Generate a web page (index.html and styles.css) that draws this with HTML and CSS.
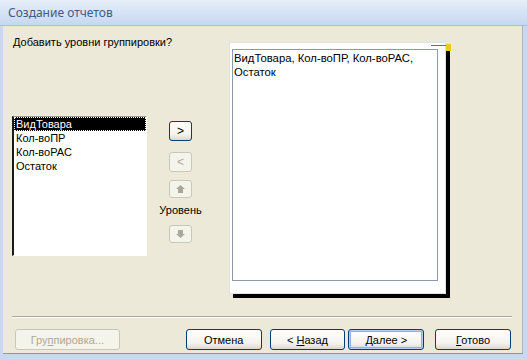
FILE: index.html
```html
<!DOCTYPE html>
<html lang="ru">
<head>
    <meta charset="UTF-8">
    <title>Создание отчетов</title>
    <link rel="stylesheet" href="styles.css">
</head>
<body>
    <div class="window">
        <div class="titlebar">Создание отчетов</div>
        <div class="content">
            <div class="main">
                <div class="left">
                    <div class="label">Добавить уровни группировки?</div>
                    <div class="picker">
                        <div class="list">
                            <div class="item selected">ВидТовара</div>
                            <div class="item">Кол-воПР</div>
                            <div class="item">Кол-воРАС</div>
                            <div class="item">Остаток</div>
                        </div>
                        <div class="moves">
                            <button class="btn small">&gt;</button>
                            <button class="btn small off">&lt;</button>
                            <button class="btn arrow off">
                                <svg width="9" height="8" viewBox="0 0 9 8"><polygon points="4.5,0 9,4 7,4 7,8 2,8 2,4 0,4" fill="#aca899"/></svg>
                            </button>
                            <div class="level">Уровень</div>
                            <button class="btn arrow off">
                                <svg width="9" height="8" viewBox="0 0 9 8"><polygon points="2,0 7,0 7,4 9,4 4.5,8 0,4 2,4" fill="#aca899"/></svg>
                            </button>
                        </div>
                    </div>
                </div>
                <div class="preview">
                    <div class="sheet">ВидТовара, Кол-воПР, Кол-воРАС, Остаток</div>
                    <span class="corner"></span>
                </div>
            </div>
            <div class="sep"></div>
            <div class="footer">
                <button class="btn wide off">Гру<u>п</u>пировка...</button>
                <button class="btn act cancel">Отмена</button>
                <button class="btn act back">&lt; <u>Н</u>азад</button>
                <button class="btn act next default"><u>Д</u>алее &gt;</button>
                <button class="btn act done"><u>Г</u>отово</button>
            </div>
        </div>
    </div>
</body>
</html>
```

FILE: styles.css
```css
body {
    margin: 0;
    font-family: "Liberation Sans", Arial, sans-serif;
    font-size: 11px;
    color: #000;
}
.window {
    width: 527px;
    height: 360px;
    display: flex;
    flex-direction: column;
    background: #c9d8ef;
    overflow: hidden;
}
.titlebar {
    height: 26px;
    box-sizing: border-box;
    padding: 5px 0 0 8px;
    font-family: "Noto Sans", "Open Sans", sans-serif;
    font-size: 12px;
    line-height: 16px;
    color: #3e5a87;
    background: linear-gradient(to bottom, #e6eef9, #d3e1f4 60%, #c6d7f0);
    border-bottom: 1px solid #a9bedf;
}
.content {
    flex: 1;
    display: flex;
    flex-direction: column;
    background: #ece9d8;
    margin: 0 4px 7px 3px;
    border-right: 1px solid #b0b4bd;
    box-shadow: 0 1px 0 #7b97cf;
    padding: 10px 0 0 9px;
}
.main {
    flex: 1;
    display: flex;
}
.left {
    width: 205px;
}
.label {
    line-height: 13px;
    padding-left: 1px;
}
.picker {
    display: flex;
    margin-top: 67px;
}
.list {
    width: 135px;
    height: 140px;
    box-sizing: border-box;
    background: #fff;
    border-top: 1px solid #9c9a92;
    border-left: 2px solid #1c1c1c;
    border-right: 1px solid #fff;
    border-bottom: 1px solid #fff;
}
.item {
    line-height: 14px;
    padding-left: 2px;
    white-space: nowrap;
}
.item.selected {
    background: #000;
    color: #fff;
    outline: 1px dotted #fff;
    outline-offset: -1px;
}
.moves {
    width: 67px;
    display: flex;
    flex-direction: column;
    align-items: center;
    padding-top: 5px;
}
.btn {
    font-family: "Liberation Sans", Arial, sans-serif;
    font-size: 11px;
    padding: 0;
    border: 1px solid #003c74;
    border-radius: 3px;
    background: linear-gradient(to bottom, #ffffff, #f4f3ee 70%, #dcd8ca);
    color: #000;
}
.btn u {
    text-decoration: underline;
}
.btn.off {
    border-color: #c9c7ba;
    background: #f5f4ea;
    color: #aca899;
}
.small {
    width: 23px;
    height: 20px;
    font-size: 12px;
}
.small.off {
    margin-top: 11px;
}
.arrow {
    width: 23px;
    height: 18px;
    display: flex;
    align-items: center;
    justify-content: center;
}
.moves .arrow:nth-child(3) {
    margin-top: 8px;
}
.level {
    margin: 6px 0 8px;
    line-height: 13px;
}
.preview {
    position: relative;
    width: 217px;
    height: 252px;
    box-sizing: border-box;
    margin: 6px 0 0 12px;
    padding: 6px 7px 12px 2px;
    background: #fff;
    border: 1px solid #e2e2e2;
    box-shadow: 4px 4px 0 #000;
}
.sheet {
    height: 100%;
    box-sizing: border-box;
    border: 1px solid #8d99ad;
    padding: 1px 2px 0 1px;
    line-height: 14px;
    font-size: 11.3px;
}
.corner {
    position: absolute;
    top: 2px;
    right: -6px;
    width: 20px;
    height: 6px;
    border-top: 1px solid #d0483c;
    box-sizing: border-box;
}
.corner::after {
    content: "";
    position: absolute;
    top: -2px;
    right: 0;
    width: 5px;
    height: 7px;
    background: #f4c430;
}
.sep {
    height: 1px;
    background: #aca899;
    border-bottom: 1px solid #fff;
    margin-right: 10px;
}
.footer {
    display: flex;
    padding: 11px 11px 3px 3px;
}
.footer .btn {
    height: 21px;
}
.wide {
    width: 105px;
}
.act {
    width: 76px;
}
.cancel {
    margin-left: 66px;
}
.back {
    margin-left: 8px;
}
.next {
    margin-left: 3px;
}
.done {
    margin-left: 11px;
}
.default {
    box-shadow: inset 0 0 0 1px #b6cdf2, inset 0 0 0 2px #8cb0ec;
}
```
